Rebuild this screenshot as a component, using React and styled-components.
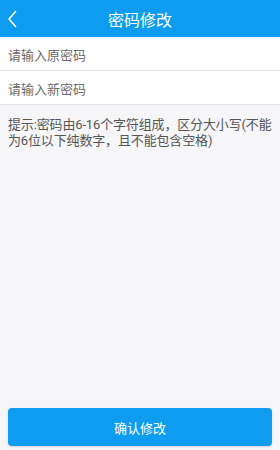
import React, { useState } from 'react';
import styled, { createGlobalStyle } from 'styled-components';

const GlobalStyle = createGlobalStyle`
  html, body {
    margin: 0;
    padding: 0;
    height: 100%;
    background: #f6f6f8;
    font-family: Roboto, "Noto Sans CJK SC", sans-serif;
  }
  #root {
    height: 100%;
  }
`;

const Page = styled.div`
  height: 450px;
  display: flex;
  flex-direction: column;
  background: #f6f6f8;
`;

const Header = styled.header`
  height: 37px;
  background: #0d9cf0;
  display: flex;
  align-items: center;
  justify-content: center;
  position: relative;
  color: #fff;
  font-size: 16px;
`;

const BackButton = styled.button`
  position: absolute;
  left: 6px;
  top: 0;
  height: 37px;
  width: 30px;
  border: none;
  background: transparent;
  display: flex;
  align-items: center;
  padding: 0;
`;

const Form = styled.div`
  background: #fff;
`;

const Field = styled.input`
  display: block;
  box-sizing: border-box;
  width: 100%;
  height: 34px;
  border: none;
  border-bottom: 1px solid #e2e2e2;
  padding: 3px 8px 0;
  font-family: inherit;
  font-size: 13px;
  color: #333;
  background: #fff;
  outline: none;
  &::placeholder {
    color: #6a6a6a;
  }
`;

const Hint = styled.p`
  margin: 0;
  padding: 12px 6px 0 8px;
  font-size: 13px;
  line-height: 16px;
  letter-spacing: -0.15px;
  color: #555;
`;

const Spacer = styled.div`
  flex: 1;
`;

const Footer = styled.div`
  padding: 0 8px 4px;
`;

const SubmitButton = styled.button`
  width: 100%;
  height: 38px;
  border: none;
  border-radius: 4px;
  background: #0d9cf0;
  color: #fff;
  font-family: inherit;
  font-size: 13px;
  box-shadow: 0 1px 2px rgba(0, 0, 0, 0.15);
`;

export default function App() {
  const [oldPwd, setOldPwd] = useState('');
  const [newPwd, setNewPwd] = useState('');

  return (
    <Page>
      <GlobalStyle />
      <Header>
        <BackButton>
          <svg width="14" height="22" viewBox="0 0 14 22">
            <path d="M10 3 L3 11 L10 19" fill="none" stroke="#fff" strokeWidth="1.5" />
          </svg>
        </BackButton>
        密码修改
      </Header>
      <Form>
        <Field
          type="password"
          placeholder="请输入原密码"
          value={oldPwd}
          onChange={(e) => setOldPwd(e.target.value)}
        />
        <Field
          type="password"
          placeholder="请输入新密码"
          value={newPwd}
          onChange={(e) => setNewPwd(e.target.value)}
        />
      </Form>
      <Hint>提示:密码由6-16个字符组成，区分大小写(不能为6位以下纯数字，且不能包含空格)</Hint>
      <Spacer />
      <Footer>
        <SubmitButton>确认修改</SubmitButton>
      </Footer>
    </Page>
  );
}
